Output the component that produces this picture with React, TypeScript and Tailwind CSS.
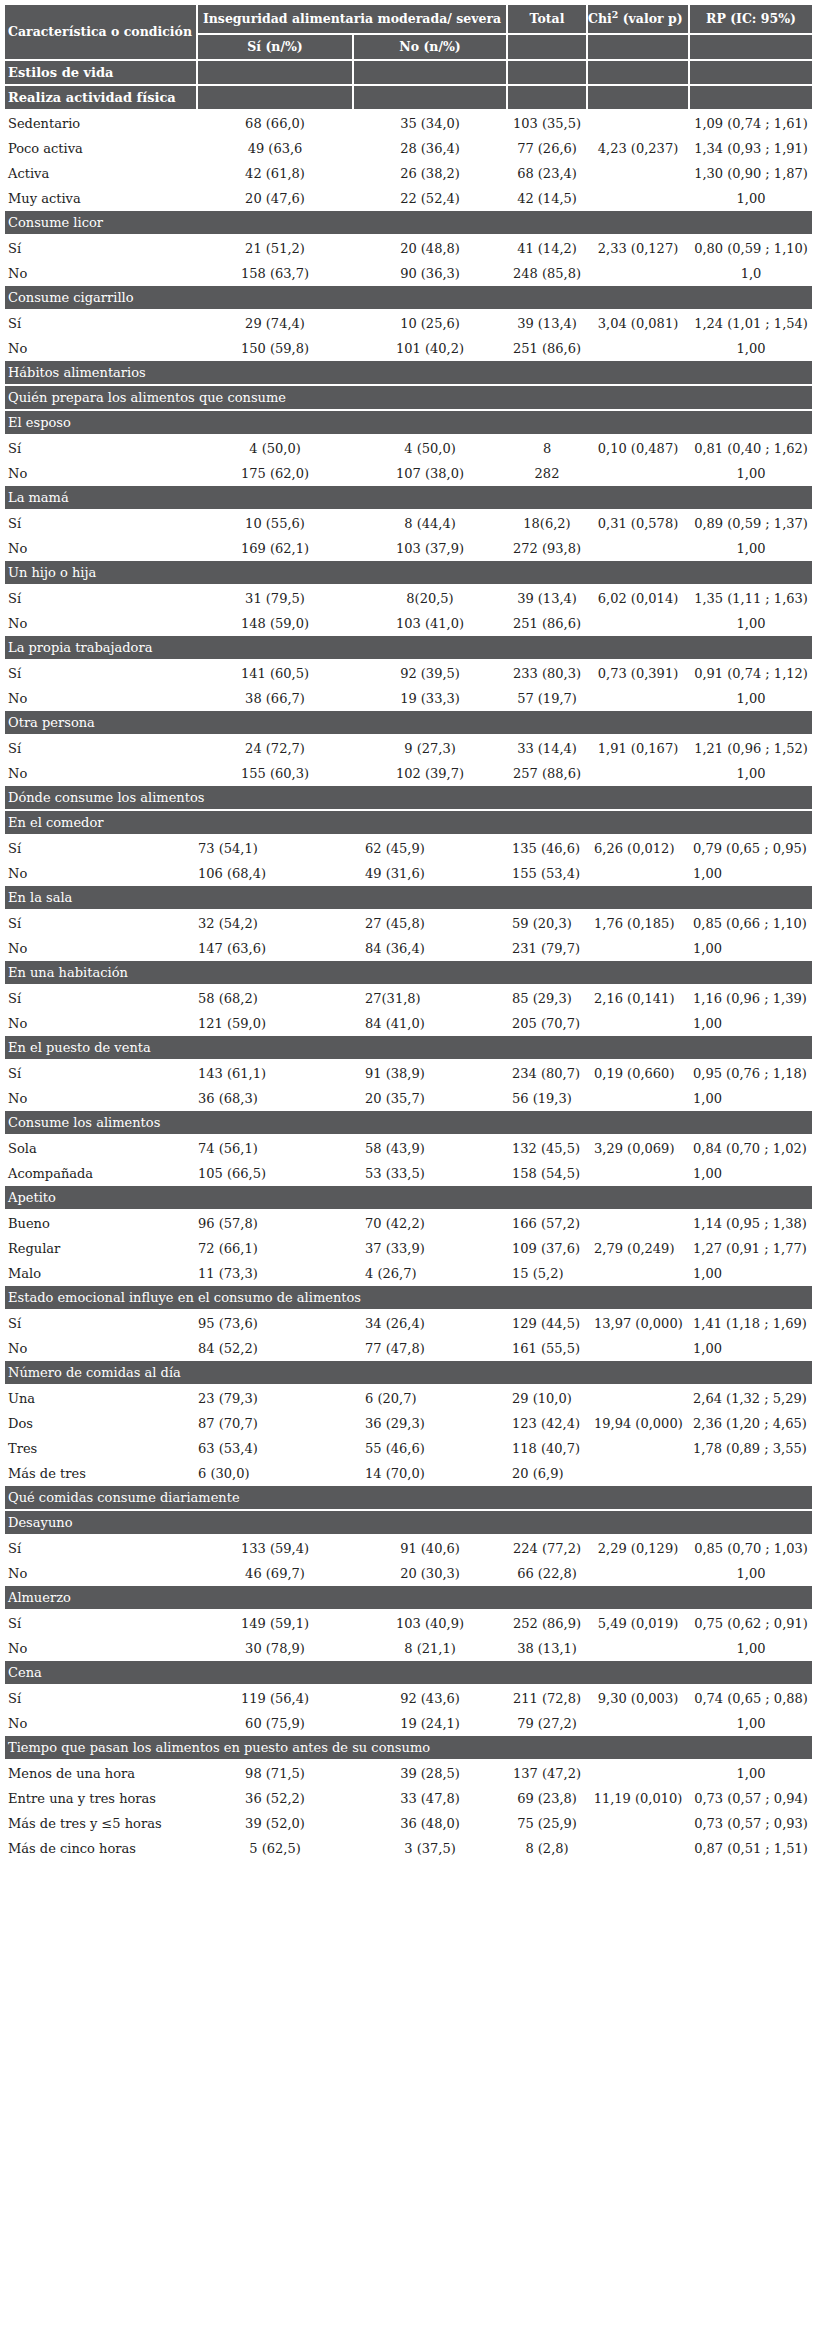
import React from "react";

type Align = "c" | "l";

type Row =
  | { kind: "sec"; label: string }
  | { kind: "data"; cells: string[]; align: Align };

const sec = (label: string): Row => ({ kind: "sec", label });

// rows of one block share an alignment (the middle block of the source table is left aligned)
const block = (align: Align, items: (string | string[])[]): Row[] =>
  items.map((it) =>
    typeof it === "string" ? sec(it) : { kind: "data", cells: it, align }
  );

const rows: Row[] = [
  ...block("c", [
    ["Sedentario", "68 (66,0)", "35 (34,0)", "103 (35,5)", "", "1,09 (0,74 ; 1,61)"],
    ["Poco activa", "49 (63,6", "28 (36,4)", "77 (26,6)", "4,23 (0,237)", "1,34 (0,93 ; 1,91)"],
    ["Activa", "42 (61,8)", "26 (38,2)", "68 (23,4)", "", "1,30 (0,90 ; 1,87)"],
    ["Muy activa", "20 (47,6)", "22 (52,4)", "42 (14,5)", "", "1,00"],
    "Consume licor",
    ["Sí", "21 (51,2)", "20 (48,8)", "41 (14,2)", "2,33 (0,127)", "0,80 (0,59 ; 1,10)"],
    ["No", "158 (63,7)", "90 (36,3)", "248 (85,8)", "", "1,0"],
    "Consume cigarrillo",
    ["Sí", "29 (74,4)", "10 (25,6)", "39 (13,4)", "3,04 (0,081)", "1,24 (1,01 ; 1,54)"],
    ["No", "150 (59,8)", "101 (40,2)", "251 (86,6)", "", "1,00"],
    "Hábitos alimentarios",
    "Quién prepara los alimentos que consume",
    "El esposo",
    ["Sí", "4 (50,0)", "4 (50,0)", "8", "0,10 (0,487)", "0,81 (0,40 ; 1,62)"],
    ["No", "175 (62,0)", "107 (38,0)", "282", "", "1,00"],
    "La mamá",
    ["Sí", "10 (55,6)", "8 (44,4)", "18(6,2)", "0,31 (0,578)", "0,89 (0,59 ; 1,37)"],
    ["No", "169 (62,1)", "103 (37,9)", "272 (93,8)", "", "1,00"],
    "Un hijo o hija",
    ["Sí", "31 (79,5)", "8(20,5)", "39 (13,4)", "6,02 (0,014)", "1,35 (1,11 ; 1,63)"],
    ["No", "148 (59,0)", "103 (41,0)", "251 (86,6)", "", "1,00"],
    "La propia trabajadora",
    ["Sí", "141 (60,5)", "92 (39,5)", "233 (80,3)", "0,73 (0,391)", "0,91 (0,74 ; 1,12)"],
    ["No", "38 (66,7)", "19 (33,3)", "57 (19,7)", "", "1,00"],
    "Otra persona",
    ["Sí", "24 (72,7)", "9 (27,3)", "33 (14,4)", "1,91 (0,167)", "1,21 (0,96 ; 1,52)"],
    ["No", "155 (60,3)", "102 (39,7)", "257 (88,6)", "", "1,00"],
  ]),
  ...block("l", [
    "Dónde consume los alimentos",
    "En el comedor",
    ["Sí", "73 (54,1)", "62 (45,9)", "135 (46,6)", "6,26 (0,012)", "0,79 (0,65 ; 0,95)"],
    ["No", "106 (68,4)", "49 (31,6)", "155 (53,4)", "", "1,00"],
    "En la sala",
    ["Sí", "32 (54,2)", "27 (45,8)", "59 (20,3)", "1,76 (0,185)", "0,85 (0,66 ; 1,10)"],
    ["No", "147 (63,6)", "84 (36,4)", "231 (79,7)", "", "1,00"],
    "En una habitación",
    ["Sí", "58 (68,2)", "27(31,8)", "85 (29,3)", "2,16 (0,141)", "1,16 (0,96 ; 1,39)"],
    ["No", "121 (59,0)", "84 (41,0)", "205 (70,7)", "", "1,00"],
    "En el puesto de venta",
    ["Sí", "143 (61,1)", "91 (38,9)", "234 (80,7)", "0,19 (0,660)", "0,95 (0,76 ; 1,18)"],
    ["No", "36 (68,3)", "20 (35,7)", "56 (19,3)", "", "1,00"],
    "Consume los alimentos",
    ["Sola", "74 (56,1)", "58 (43,9)", "132 (45,5)", "3,29 (0,069)", "0,84 (0,70 ; 1,02)"],
    ["Acompañada", "105 (66,5)", "53 (33,5)", "158 (54,5)", "", "1,00"],
    "Apetito",
    ["Bueno", "96 (57,8)", "70 (42,2)", "166 (57,2)", "", "1,14 (0,95 ; 1,38)"],
    ["Regular", "72 (66,1)", "37 (33,9)", "109 (37,6)", "2,79 (0,249)", "1,27 (0,91 ; 1,77)"],
    ["Malo", "11 (73,3)", "4 (26,7)", "15 (5,2)", "", "1,00"],
    "Estado emocional influye en el consumo de alimentos",
    ["Sí", "95 (73,6)", "34 (26,4)", "129 (44,5)", "13,97 (0,000)", "1,41 (1,18 ; 1,69)"],
    ["No", "84 (52,2)", "77 (47,8)", "161 (55,5)", "", "1,00"],
    "Número de comidas al día",
    ["Una", "23 (79,3)", "6 (20,7)", "29 (10,0)", "", "2,64 (1,32 ; 5,29)"],
    ["Dos", "87 (70,7)", "36 (29,3)", "123 (42,4)", "19,94 (0,000)", "2,36 (1,20 ; 4,65)"],
    ["Tres", "63 (53,4)", "55 (46,6)", "118 (40,7)", "", "1,78 (0,89 ; 3,55)"],
    ["Más de tres", "6 (30,0)", "14 (70,0)", "20 (6,9)", "", ""],
  ]),
  ...block("c", [
    "Qué comidas consume diariamente",
    "Desayuno",
    ["Sí", "133 (59,4)", "91 (40,6)", "224 (77,2)", "2,29 (0,129)", "0,85 (0,70 ; 1,03)"],
    ["No", "46 (69,7)", "20 (30,3)", "66 (22,8)", "", "1,00"],
    "Almuerzo",
    ["Sí", "149 (59,1)", "103 (40,9)", "252 (86,9)", "5,49 (0,019)", "0,75 (0,62 ; 0,91)"],
    ["No", "30 (78,9)", "8 (21,1)", "38 (13,1)", "", "1,00"],
    "Cena",
    ["Sí", "119 (56,4)", "92 (43,6)", "211 (72,8)", "9,30 (0,003)", "0,74 (0,65 ; 0,88)"],
    ["No", "60 (75,9)", "19 (24,1)", "79 (27,2)", "", "1,00"],
    "Tiempo que pasan los alimentos en puesto antes de su consumo",
    ["Menos de una hora", "98 (71,5)", "39 (28,5)", "137 (47,2)", "", "1,00"],
    ["Entre una y tres horas", "36 (52,2)", "33 (47,8)", "69 (23,8)", "11,19 (0,010)", "0,73 (0,57 ; 0,94)"],
    ["Más de tres y  ≤5 horas", "39 (52,0)", "36 (48,0)", "75 (25,9)", "", "0,73 (0,57 ; 0,93)"],
    ["Más de cinco horas", "5 (62,5)", "3 (37,5)", "8 (2,8)", "", "0,87 (0,51 ; 1,51)"],
  ]),
];

// left padding per column for the left-aligned block
const leftPad = ["pl-[3px]", "pl-0", "pl-[11px]", "pl-[4px]", "pl-[6px]", "pl-[3px]"];

const dark = "bg-[#58595b] text-white";

const App = () => {
  return (
    <div
      className="min-h-[2334px] w-[817px] bg-white p-[3px] text-[13px] text-[#222]"
      style={{ fontFamily: '"DejaVu Serif", serif' }}
    >
      <table className="w-[811px] table-fixed border-separate border-spacing-[2px]">
        <colgroup>
          <col className="w-[191px]" />
          <col className="w-[154px]" />
          <col className="w-[152px]" />
          <col className="w-[78px]" />
          <col className="w-[100px]" />
          <col className="w-[122px]" />
        </colgroup>
        <thead className="text-[12.5px] font-bold">
          <tr className="h-[28px]">
            <th rowSpan={2} className={`${dark} px-[3px] text-left font-bold whitespace-nowrap`}>
              Característica o condición
            </th>
            <th colSpan={2} className={`${dark} px-0 text-center font-bold whitespace-nowrap`}>
              Inseguridad alimentaria moderada/ severa
            </th>
            <th className={`${dark} text-center font-bold`}>Total</th>
            <th className={`${dark} px-0 text-left font-bold whitespace-nowrap`}>
              Chi<sup>2</sup> (valor p)
            </th>
            <th className={`${dark} text-center font-bold`}>RP (IC: 95%)</th>
          </tr>
          <tr className="h-[24px]">
            <th className={`${dark} text-center font-bold`}>Sí (n/%)</th>
            <th className={`${dark} text-center font-bold`}>No (n/%)</th>
            <th className={dark} />
            <th className={dark} />
            <th className={dark} />
          </tr>
          {["Estilos de vida", "Realiza actividad física"].map((t) => (
            <tr key={t} className="h-[23px]">
              <th className={`${dark} px-[3px] text-left text-[13px] font-bold whitespace-nowrap`}>{t}</th>
              <th className={dark} />
              <th className={dark} />
              <th className={dark} />
              <th className={dark} />
              <th className={dark} />
            </tr>
          ))}
        </thead>
        <tbody>
          {rows.map((r, i) =>
            r.kind === "sec" ? (
              <tr key={i} className="h-[23px]">
                <td colSpan={6} className={`${dark} px-[3px] pt-px whitespace-nowrap`}>
                  {r.label}
                </td>
              </tr>
            ) : (
              <tr key={i} className="h-[23px]">
                {r.cells.map((c, j) => (
                  <td
                    key={j}
                    className={`pt-[2px] whitespace-nowrap ${
                      j === 0
                        ? "pl-[3px] text-left"
                        : r.align === "c"
                        ? "text-center"
                        : `${leftPad[j]} text-left`
                    }`}
                  >
                    {c}
                  </td>
                ))}
              </tr>
            )
          )}
        </tbody>
      </table>
    </div>
  );
};

export default App;
